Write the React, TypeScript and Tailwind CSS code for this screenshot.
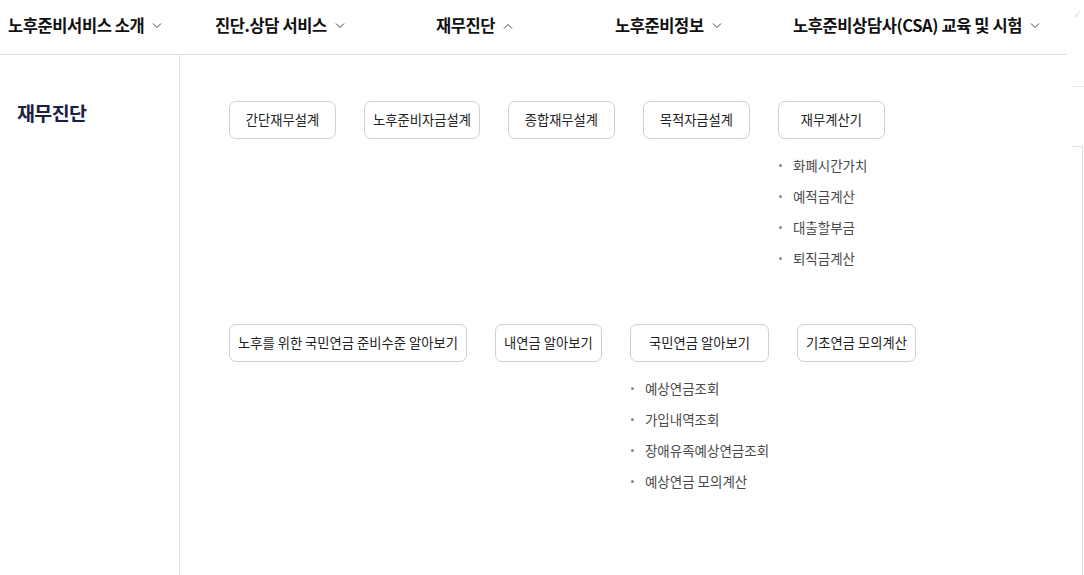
import React from "react";

type Menu = { label: string; subs?: string[] };

const NAV: { label: string; open?: boolean; width: string }[] = [
  { label: "노후준비서비스 소개", width: "w-[207px]" },
  { label: "진단.상담 서비스", width: "w-[221px]" },
  { label: "재무진단", open: true, width: "w-[179px]" },
  { label: "노후준비정보", width: "w-[178px]" },
  { label: "노후준비상담사(CSA) 교육 및 시험", width: "w-auto" },
];

const GROUP_1: Menu[] = [
  { label: "간단재무설계" },
  { label: "노후준비자금설계" },
  { label: "종합재무설계" },
  { label: "목적자금설계" },
  { label: "재무계산기", subs: ["화폐시간가치", "예적금계산", "대출할부금", "퇴직금계산"] },
];

const GROUP_2: Menu[] = [
  { label: "노후를 위한 국민연금 준비수준 알아보기" },
  { label: "내연금 알아보기" },
  {
    label: "국민연금 알아보기",
    subs: ["예상연금조회", "가입내역조회", "장애유족예상연금조회", "예상연금 모의계산"],
  },
  { label: "기초연금 모의계산" },
];

function Chevron({ up }: { up?: boolean }) {
  return (
    <svg width="10" height="6" viewBox="0 0 10 6" fill="none" className="ml-[8px] mt-[1px]">
      <path
        d={up ? "M1 5.5L5 1.5L9 5.5" : "M1 0.5L5 4.5L9 0.5"}
        stroke="#444"
        strokeWidth="1"
      />
    </svg>
  );
}

function MenuGroup({ items }: { items: Menu[] }) {
  return (
    <ul className="flex items-start gap-[28px]">
      {items.map((m) => (
        <li key={m.label} className="flex flex-col">
          <button className="h-[38px] min-w-[107px] w-full whitespace-nowrap rounded-[7px] border border-[#d0d0d0] bg-white px-2 text-[13.3px] text-[#222]">
            {m.label}
          </button>
          {m.subs && (
            <ul className="mt-[11px]">
              {m.subs.map((s) => (
                <li key={s} className="flex h-[31px] items-center whitespace-nowrap text-[13.5px] text-[#4a4a4a]">
                  <span className="ml-[1px] mr-[11px] h-[3px] w-[3px] rounded-full bg-[#888]" />
                  {s}
                </li>
              ))}
            </ul>
          )}
        </li>
      ))}
    </ul>
  );
}

export default function App() {
  return (
    <div
      className="relative min-h-[575px] w-[1084px] overflow-hidden bg-white"
      style={{ fontFamily: '"Noto Sans CJK KR", "Noto Sans", sans-serif' }}
    >
      <header className="flex h-[55px] w-[1067px] items-center border-b border-[#dcdcdc] pb-[3px] pl-2">
        {NAV.map((n) => (
          <div key={n.label} className={`flex shrink-0 items-center ${n.width}`}>
            <span className="whitespace-nowrap text-[16.5px] font-bold tracking-[-0.4px] text-[#111]">
              {n.label}
            </span>
            <Chevron up={n.open} />
          </div>
        ))}
      </header>

      <div className="flex min-h-[520px]">
        <aside className="w-[180px] shrink-0 border-r border-[#e4e4e4] pl-[17px] pt-[43px]">
          <h2 className="text-[19.5px] font-bold tracking-[-0.6px] text-[#1a2142]">재무진단</h2>
        </aside>
        <main className="flex flex-col gap-[50px] pl-[49px] pt-[46px]">
          <MenuGroup items={GROUP_1} />
          <MenuGroup items={GROUP_2} />
        </main>
      </div>

      {/* 오른쪽 가장자리의 잘린 요소들 */}
      <div className="absolute right-[4px] top-[8px] text-[8px] text-[#ccc]">✓</div>
      <div className="absolute left-[1071px] top-[86px] h-px w-[13px] bg-[#e6e6e6]" />
      <div className="absolute left-[1072px] top-[146px] h-[430px] w-[11px] border-l-0 border-r border-t border-[#e0e0e0]" />
    </div>
  );
}
